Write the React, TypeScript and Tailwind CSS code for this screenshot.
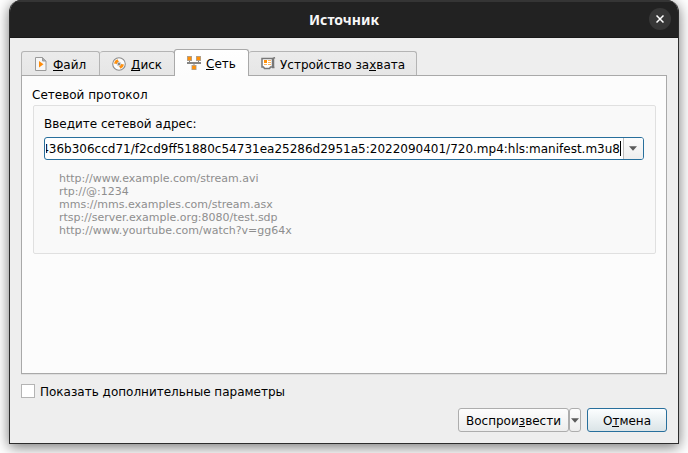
import type { ReactNode } from 'react';

const hints = [
  'http://www.example.com/stream.avi',
  'rtp://@:1234',
  'mms://mms.examples.com/stream.asx',
  'rtsp://server.example.org:8080/test.sdp',
  'http://www.yourtube.com/watch?v=gg64x',
];

function Key({ children }: { children: ReactNode }) {
  return <span className="inline-block h-[12px] border-b border-black leading-none">{children}</span>;
}

function FileIcon() {
  return (
    <svg width="12" height="14" viewBox="0 0 12 14" className="shrink-0">
      <path d="M.5.500H7.500L11 4v9.500H.5z" fill="#f6f6f6" stroke="#9a9a9a" />
      <path d="M7.500.500V4H11" fill="#aaa" stroke="#9a9a9a" />
      <path d="M4 4v6.500l4.500-3.200z" fill="#ff8c0a" />
    </svg>
  );
}

function DiscIcon() {
  return (
    <svg width="14" height="14" viewBox="0 0 14 14" className="shrink-0">
      <circle cx="7" cy="7" r="6.3" fill="#fcfcfc" stroke="#8c8c8c" strokeWidth="1.1" />
      <path d="M5 7 2 6.500A5.300 5.300 0 0 1 5.500 2.200L7 5zM9 7l3 .5A5.300 5.300 0 0 1 8.500 11.800L7 9z" fill="#ff910f" />
      <circle cx="7" cy="7" r="1.900" fill="#eee" stroke="#aaa" strokeWidth=".6" />
      <circle cx="7" cy="7" r=".9" fill="#555" />
    </svg>
  );
}

function NetworkIcon() {
  return (
    <svg width="14" height="14" viewBox="0 0 14 14" className="shrink-0">
      <path d="M0 0h5v5H0zM9 0h5v5H9zM4.500 9h5v5h-5z" fill="#a3a3a3" />
      <path d="M.7.700h3.600v3.600H.7zM9.700.700h3.600v3.600H9.700zM5.200 9.700h3.600v3.600H5.200z" fill="#ff910a" />
      <path d="M0 6h14v2H0zM2 5h1v1H2zM11 5h1v1h-1zM6.500 8h1v1h-1z" fill="#858585" />
    </svg>
  );
}

function CaptureIcon() {
  return (
    <svg width="15" height="13" viewBox="0 0 15 13" className="shrink-0">
      <path d="M1 1.500h10.500v8.500H9.500l-1 1.500h-5l-1-1.500H1z" fill="#fff" stroke="#777" strokeWidth="1.500" />
      <path d="M12.500 2v8.500M11 10.500h2.500M12 1.500l2-1" stroke="#777" strokeWidth="1.500" />
      <path d="M3 3h3v3H3z" fill="#ff910a" />
      <path d="M7 3h3v1H7zM7 5h3v1H7zM3 7h3v1H3zM7 7h3v1H7z" fill="#ffb45a" />
    </svg>
  );
}

function Arrow() {
  return (
    <svg width="8" height="5" viewBox="0 0 8 5">
      <path d="M0 .3h8L4 4.700z" fill="#5b5b5b" />
    </svg>
  );
}

const tab = 'flex h-6 items-center rounded-t-[3px] border-t border-r border-[#b4b4b4] bg-linear-to-b from-[#ebebeb] to-[#e6e6e6]';

export default function App() {
  return (
    <div className="flex h-[453px] w-[688px] items-start justify-center overflow-hidden bg-white text-[12px] text-black [font-family:'DejaVu_Sans',sans-serif]">
      <div className="flex h-[444px] w-[670px] flex-col overflow-hidden rounded-t-[12px] border-x border-b border-[#2c2c2c] bg-[#eeeeee] shadow-[0_3px_14px_rgba(0,0,0,0.55)]">
        <header className="grid h-[38px] shrink-0 grid-cols-[1fr_auto_1fr] items-center border-t-2 border-b border-t-[#353535] border-b-[#191919] bg-[#222222] pr-[7px]">
          <span />
          <h1 className="pl-[7px] text-[14px] leading-5 font-bold text-[#f7f7f7] [font-family:'Noto_Sans',sans-serif]">Источник</h1>
          <button className="mb-px flex size-[22px] items-center justify-center justify-self-end rounded-full bg-[#373737]">
            <svg width="8" height="8" viewBox="0 0 8 8">
              <path d="m.5.500 7 7M7.500.500l-7 7" stroke="#fff" strokeWidth="1.500" />
            </svg>
          </button>
        </header>

        <main className="flex flex-col px-[11px] pt-[11px]">
          <nav className="flex h-[26px] shrink-0 items-end">
            <div className={`${tab} w-[79px] border-l pl-[13px]`}>
              <FileIcon />
              <span className="ml-[6px] pt-[2px]"><Key>Ф</Key>айл</span>
            </div>
            <div className={`${tab} w-[75px] pl-3`}>
              <DiscIcon />
              <span className="ml-[5px] pt-[2px]"><Key>Д</Key>иск</span>
            </div>
            <div className="relative z-10 -mb-px -ml-px flex h-[27px] w-[75px] items-center rounded-t-[3px] border-x border-t border-[#a9a9a9] bg-linear-to-b from-white to-[#fcfcfc] pb-px pl-3">
              <NetworkIcon />
              <span className="ml-[5px] pt-[2px]"><Key>С</Key>еть</span>
            </div>
            <div className={`${tab} w-[168px] pl-3`}>
              <CaptureIcon />
              <span className="ml-1 pt-[2px]">Устройство за<Key>х</Key>вата</span>
            </div>
          </nav>

          <section className="flex h-[299px] w-[646px] shrink-0 flex-col border border-[#a9a9a9] bg-[#fcfcfc] px-[10px] pt-[11px] shadow-[0_1px_0_#dfdfdf]">
            <h2 className="h-[18px] leading-[16px]">Сетевой протокол</h2>
            <div className="ml-px flex h-[149px] w-[623px] flex-col rounded-[2px] border border-[#e0e0e0] bg-[#f9f9f9] px-[10px] pt-[10px]">
              <label className="h-[21px] leading-[16px]">Введите сетевой адрес:</label>
              <div className="flex h-[23px] w-[600px] overflow-hidden rounded-[3px] border border-[#286f9c] bg-white">
                <div className="ml-px flex min-w-0 flex-1 items-center justify-end overflow-hidden whitespace-nowrap">
                  <span>436b306ccd71/f2cd9ff51880c54731ea25286d2951a5:2022090401/720.mp4:hls:manifest.m3u8</span>
                  <span className="mr-[2px] h-[15px] w-px shrink-0 bg-black" />
                </div>
                <button className="flex w-[20px] shrink-0 items-center justify-center border-l border-[#bcbcbc] bg-linear-to-b from-[#fcfcfc] to-[#eeeeee] pr-[2px]">
                  <Arrow />
                </button>
              </div>
              <ul className="mt-[12px] ml-[15px] text-[11px] leading-[13px] text-[#8e8e8e]">
                {hints.map((hint) => <li key={hint}>{hint}</li>)}
              </ul>
            </div>
          </section>

          <label className="mt-[10px] flex h-[14px] items-center gap-[5px]">
            <span className="size-[14px] border border-[#b4b4b4] bg-white" />
            <span className="pt-px">Показать дополнительные параметры</span>
          </label>

          <footer className="mt-[10px] flex h-6 w-[646px] justify-end">
            <button className="w-[111px] rounded-[3px] border border-[#adadad] bg-linear-to-b from-[#fdfdfd] to-[#ededed] pt-[2px]">Воспрои<Key>з</Key>вести</button>
            <button className="flex w-3 items-center justify-center rounded-[3px] border border-[#adadad] bg-linear-to-b from-[#fdfdfd] to-[#ededed]"><Arrow /></button>
            <button className="ml-[6px] w-20 rounded-[3px] border border-[#286f9c] bg-linear-to-b from-[#fcfeff] to-[#dbe4e7] pt-[2px]">О<Key>т</Key>мена</button>
          </footer>
        </main>
      </div>
    </div>
  );
}
